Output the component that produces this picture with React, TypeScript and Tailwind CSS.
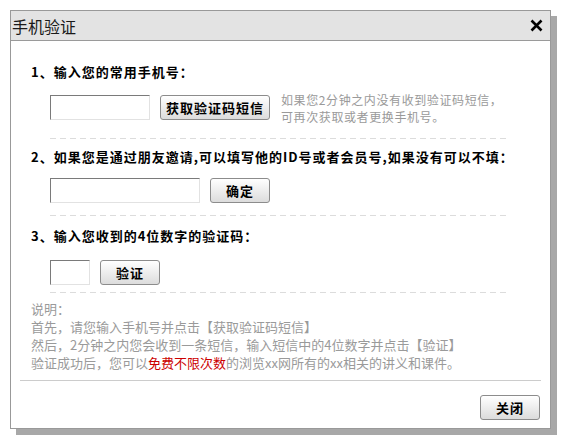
import React from "react";

const font = { fontFamily: '"Noto Sans CJK SC", "Noto Sans", sans-serif' };

function Btn({ children, w }: { children: React.ReactNode; w: string }) {
  return (
    <button
      className={`${w} h-[25px] rounded-[3px] border border-[#8c8c8c] bg-gradient-to-b from-[#ffffff] to-[#dcdcdc] text-[13px] font-bold text-black tracking-[1px] flex items-center justify-center leading-none`}
    >
      {children}
    </button>
  );
}

function Field({ w }: { w: string }) {
  return (
    <input
      className={`${w} h-[25px] border-t border-l border-r border-b border-t-[#7a7a7a] border-l-[#7a7a7a] border-r-[#e2e2e2] border-b-[#e2e2e2] bg-white outline-none`}
    />
  );
}

function Dash({ mt }: { mt: string }) {
  return (
    <div
      className={`${mt} ml-[19px] w-[460px] h-px bg-[linear-gradient(to_right,#dcdcdc_60%,transparent_0)] bg-[length:10px_1px]`}
    />
  );
}

export default function App() {
  return (
    <div className="w-[563px] h-[443px] bg-white pt-[10px] pl-[10px]" style={font}>
      <div className="w-[541px] h-[419px] border border-[#999999] bg-white shadow-[6px_6px_0_#a8a8a8] flex flex-col">
        <div className="h-[30px] shrink-0 bg-[#e3e3e3] border-b border-[#9a9a9a] flex items-center justify-between pl-[1px] pr-[7px]">
          <span className="text-[16px] text-[#1a1a1a] leading-none">手机验证</span>
          <svg width="13" height="13" viewBox="0 0 13 13">
            <path d="M1.5 1.5 L11.5 11.5 M11.5 1.5 L1.5 11.5" stroke="#000" strokeWidth="2.6" />
          </svg>
        </div>
        <div className="pl-[20px] pt-[21px] flex flex-col">
          <div className="h-[20px] flex items-center text-[13px] font-bold tracking-[1px] text-black">1、输入您的常用手机号：</div>
          <div className="mt-[13px] ml-[19px] flex items-start">
            <Field w="w-[100px]" />
            <div className="ml-[10px]"><Btn w="w-[110px]">获取验证码短信</Btn></div>
            <div className="ml-[11px] -mt-[4px] text-[12px] tracking-[0.6px] leading-[17px] text-[#9a9a9a] whitespace-nowrap">
              <div>如果您2分钟之内没有收到验证码短信，</div>
              <div>可再次获取或者更换手机号。</div>
            </div>
          </div>
          <Dash mt="mt-[13px]" />
          <div className="mt-[8px] h-[20px] flex items-center text-[13px] font-bold tracking-[1px] text-black whitespace-nowrap">2、如果您是通过朋友邀请,可以填写他的ID号或者会员号,如果没有可以不填：</div>
          <div className="mt-[11px] ml-[19px] flex items-start">
            <Field w="w-[150px]" />
            <div className="ml-[10px]"><Btn w="w-[60px]">确定</Btn></div>
          </div>
          <Dash mt="mt-[12px]" />
          <div className="mt-[10px] h-[20px] flex items-center text-[13px] font-bold tracking-[1px] text-black">3、输入您收到的4位数字的验证码：</div>
          <div className="mt-[14px] ml-[19px] flex items-start">
            <Field w="w-[40px]" />
            <div className="ml-[10px]"><Btn w="w-[60px]">验证</Btn></div>
          </div>
          <Dash mt="mt-[7px]" />
          <div className="mt-[7px] text-[13px] leading-[18px] text-[#9a9a9a] whitespace-nowrap">
            <div>说明：</div>
            <div>首先，请您输入手机号并点击【获取验证码短信】</div>
            <div>然后，2分钟之内您会收到一条短信，输入短信中的4位数字并点击【验证】</div>
            <div>
              验证成功后，您可以<span className="text-[#cc0000]">免费不限次数</span>的浏览xx网所有的xx相关的讲义和课件。
            </div>
          </div>
        </div>
        <div className="mt-[8px] mx-[9px] h-px bg-[#cccccc]" />
        <div className="mt-[14px] flex justify-end pr-[10px]">
          <Btn w="w-[60px]">关闭</Btn>
        </div>
      </div>
    </div>
  );
}
